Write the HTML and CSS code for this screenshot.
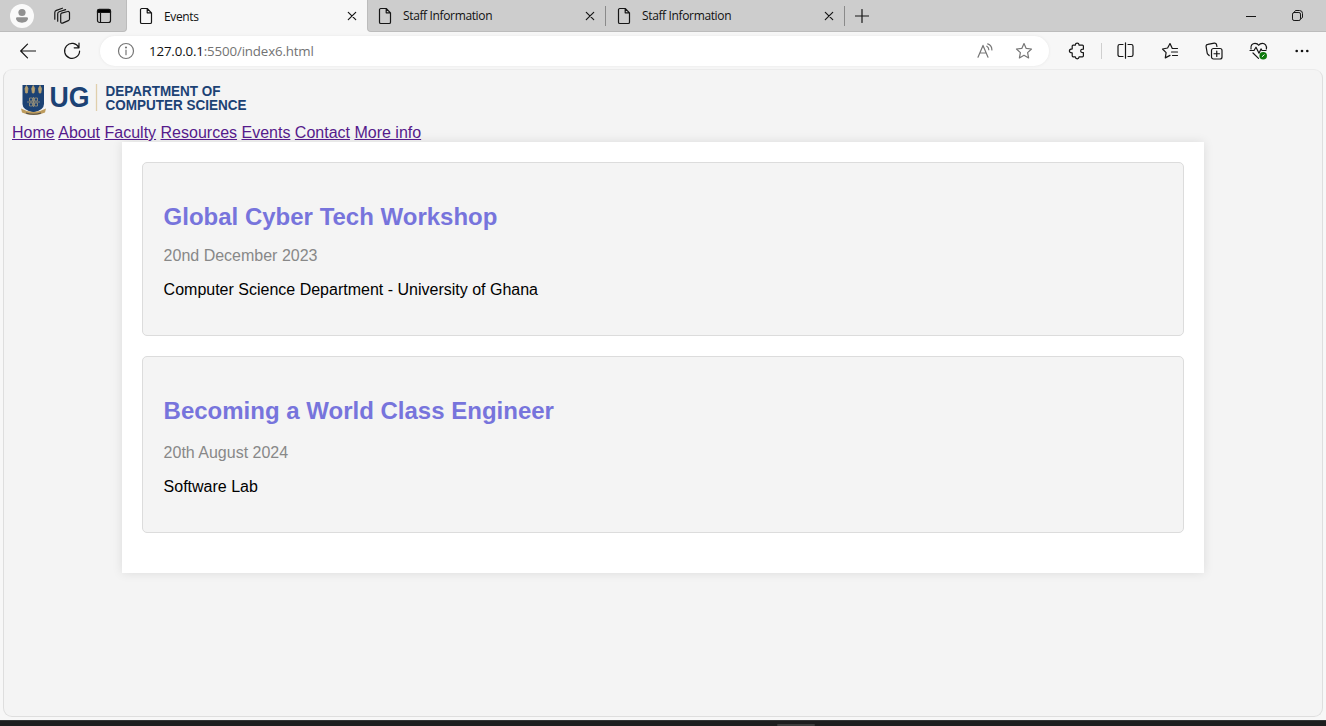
FILE: index.html
```html
<!DOCTYPE html>
<html lang="en">
<head>
<meta charset="utf-8">
<title>Events</title>
<link rel="stylesheet" href="styles.css">
</head>
<body>
<svg width="0" height="0" class="defs">
  <symbol id="file" viewBox="0 0 14 18"><path d="M2.5 1.5h5.7l4.3 4.3v9.4a1.3 1.3 0 0 1-1.3 1.3H2.8a1.3 1.3 0 0 1-1.3-1.3V2.8a1.3 1.3 0 0 1 1.3-1.3M8.2 1.5V5.8h4.3"/></symbol>
  <symbol id="close" viewBox="0 0 10 10"><path d="M1.300 1.300l7.400 7.400M8.700 1.300L1.300 8.700"/></symbol>
</svg>
<header class="tabstrip">
  <div class="window-tools">
    <svg class="icon avatar" viewBox="0 0 24 24"><circle cx="12" cy="12" r="12" fill="#fafafa"/><circle cx="12" cy="8.5" r="3.6" fill="#919191"/><path d="M7.3 13.3h9.4a1.3 1.3 0 0 1 1.3 1.3c0 2.2-2.7 4.2-6 4.2s-6-2-6-4.2a1.3 1.3 0 0 1 1.3-1.3z" fill="#919191"/></svg>
    <svg class="icon workspaces" viewBox="0 0 18 18"><path d="M8.6 6.1l6-1.6a1.4 1.4 0 0 1 1.9 1.3v6.2a1.8 1.8 0 0 1-1.2 1.6l-5.7 2.5a1.3 1.3 0 0 1-1.9-1.1V8a2 2 0 0 1 1-1.9M4.7 14.2V7a2.2 2.2 0 0 1 1.5-2.2l6.4-2.2M1.8 12.2V5.6a2.4 2.4 0 0 1 1.6-2.2l6-2.2"/></svg>
    <svg class="icon tabactions" viewBox="0 0 16 16"><rect x="1.5" y="1.5" width="13" height="13" rx="2"/><path d="M1.5 4.5V3a1.7 1.7 0 0 1 1.7-1.7h9.6A1.7 1.7 0 0 1 14.5 3v1.5z" fill="#000"/><path d="M4.5 5v9.5"/></svg>
  </div>
  <div class="tab active"><svg class="icon file"><use href="#file"/></svg><span>Events</span><svg class="icon close"><use href="#close"/></svg></div>
  <div class="tab"><svg class="icon file"><use href="#file"/></svg><span>Staff Information</span><svg class="icon close"><use href="#close"/></svg></div>
  <div class="tab ruled"><svg class="icon file"><use href="#file"/></svg><span>Staff Information</span><svg class="icon close"><use href="#close"/></svg></div>
  <div class="new-tab"><svg class="icon plus" viewBox="0 0 14 14"><path d="M7 .5v13M.5 7h13"/></svg></div>
  <div class="window-buttons">
    <svg class="icon min" viewBox="0 0 10 10"><path d="M0 5.5h10"/></svg>
    <svg class="icon restore" viewBox="0 0 11 11"><rect x=".5" y="2.5" width="8" height="8" rx="1.6"/><path d="M2.5 1.5A2 2 0 0 1 4 .5h3.5a3 3 0 0 1 3 3V7a2 2 0 0 1-1 1.5"/></svg>
  </div>
</header>
<div class="toolbar">
  <svg class="icon back" viewBox="0 0 16 16"><path d="M15.8 8H.8M7.5 1.2L.7 8l6.8 6.8"/></svg>
  <svg class="icon reload" viewBox="0 0 18 18"><path d="M15.8 5.5A7.5 7.5 0 1 0 16.6 9M16 1v4.8h-4.8"/></svg>
  <div class="address">
    <svg class="icon info" viewBox="0 0 18 18"><circle cx="9" cy="9" r="7.5"/><path d="M9 8v4.7"/><circle cx="9" cy="5.5" r=".5" fill="#767676"/></svg>
    <span class="url"><b>127.0.0.1</b>:5500/index6.html</span>
    <svg class="icon aloud" viewBox="0 0 16 16"><path d="M1 14.2L6 2.4l5 11.8M2.8 10h6.4M9.8 3.2a4 4 0 0 1 2 3.5M10.7.9a6.5 6.5 0 0 1 4.2 6"/></svg>
    <svg class="icon star" viewBox="0 0 18 18"><path d="M9 1.5l2.2 4.9 5.3.6-3.9 3.6 1 5.3L9 13.3l-4.6 2.6 1-5.3L1.5 7l5.3-.6z"/></svg>
  </div>
  <svg class="icon puzzle" viewBox="0 0 18 18"><path d="M4.2 4.1c0-.7.4-1 1-1h2.1c.1-1.2.8-1.9 1.9-1.9s1.8.7 1.9 1.9h3.3c.7 0 1 .4 1 1v3.1c-1.7-.2-2.7.5-2.7 1.7s1 1.9 2.7 1.7v3.2c0 .7-.4 1-1 1h-3.3c-.1 1.3-.8 2-1.9 2s-1.8-.7-1.9-2H5.2c-.6 0-1-.4-1-1v-2.9c-1.7-.1-2.8-.8-2.8-2s1.1-1.9 2.8-2z"/></svg>
  <i class="divider"></i>
  <svg class="icon split" viewBox="0 0 17 17"><path d="M8.5.8v15.4M6 2.5H2.7A1.7 1.7 0 0 0 1 4.2v8.6a1.7 1.7 0 0 0 1.7 1.7H6M11 2.5h3.3A1.7 1.7 0 0 1 16 4.2v8.6a1.7 1.7 0 0 1-1.7 1.7H11"/></svg>
  <svg class="icon favs" viewBox="0 0 18 18"><path d="M16.5 6.5h-5.2L9 1.5 6.6 6 1.5 7l3.6 3.6-.8 5.3L9 13.4M10.5 10h6M11.5 13.5h5"/></svg>
  <svg class="icon collections" viewBox="0 0 18 18"><rect x="6.5" y="6.5" width="10.5" height="10.5" rx="2"/><path d="M11.75 9v5.5M9 11.75h5.5M4.2 13.5L3.1 12.5a2 2 0 0 1-.9-1.4L1.1 4.7A2 2 0 0 1 2.8 2.3l6.5-1.2a2 2 0 0 1 2.3 1.7l.3 1.7"/></svg>
  <svg class="icon heart" viewBox="0 0 20 18"><path d="M2 7C1.3 3.2 3.7 1.3 6 1.3c1.8 0 3 .8 3.7 2 .7-1.2 2-2 3.7-2 2.500 0 4.600 2.100 4 5.700M1 8.500h4l2-3.300 3 6 2-4.300 1 1.600h4M4 11l5.500 5.400"/><circle cx="14.200" cy="13.800" r="3.800" fill="#0e7a0d" stroke="none"/><path d="M13.200 14.600l2-1.800" stroke="#fff" stroke-width="1"/></svg>
  <svg class="icon more" viewBox="0 0 14 4"><g fill="#111" stroke="none"><circle cx="1.700" cy="2" r="1.300"/><circle cx="7" cy="2" r="1.300"/><circle cx="12.300" cy="2" r="1.300"/></g></svg>
</div>
<main class="page">
  <svg class="logo" viewBox="0 0 240 44">
    <path d="M10.5 7h21.5v19q0 6-10.5 8.5Q10.5 32 10.5 26z" fill="#1c4274"/>
    <path d="M13 10.5l1.5-3 1.5 3-.7 4.500h-1.600zM19.700 10.500l1.500-3 1.500 3-.7 4.500h-1.600zM26.500 10.500l1.500-3 1.500 3-.7 4.500h-1.600z" fill="#b5a071" stroke="#b5a071" stroke-width=".8"/>
    <path d="M15 24h13M21.500 19v10M17.500 20h3v3h-3zM22.500 20h3v3h-3zM17.500 25h3v3h-3zM22.500 25h3v3h-3z" fill="none" stroke="#a39878" stroke-width=".8"/>
    <path d="M9 30.500q12.500 7 25 0l-1 4q-11.500 5-23 0z" fill="#bd9b5c"/><path d="M14 35q7.500 2.500 15 0" fill="none" stroke="#4d4c49" stroke-width="1.200"/>
    <text class="ug" x="37.500" y="28.700" textLength="40" lengthAdjust="spacingAndGlyphs">UG</text>
    <path d="M84.500 6v27" stroke="#e0cfac" stroke-width="1.300"/>
    <text class="dept" x="93.500" y="17.500" textLength="115" lengthAdjust="spacingAndGlyphs">DEPARTMENT OF</text>
    <text class="dept" x="93.500" y="32.300" textLength="141" lengthAdjust="spacingAndGlyphs">COMPUTER SCIENCE</text>
  </svg>
  <nav>
    <a href="#">Home</a>
    <a href="#">About</a>
    <a href="#">Faculty</a>
    <a href="#">Resources</a>
    <a href="#">Events</a>
    <a href="#">Contact</a>
    <a href="#">More info</a>
  </nav>
  <section class="container">
    <article class="event">
      <h2>Global Cyber Tech Workshop</h2>
      <p class="date">20nd December 2023</p>
      <p>Computer Science Department - University of Ghana</p>
    </article>
    <article class="event second">
      <h2>Becoming a World Class Engineer</h2>
      <p class="date">20th August 2024</p>
      <p>Software Lab</p>
    </article>
  </section>
</main>
<footer class="taskbar"><i></i></footer>
</body>
</html>
```
FILE: styles.css
```css
* { box-sizing: border-box; }
body { margin: 0; height: 726px; overflow: hidden; display: flex; flex-direction: column; background: #f7f7f7; font-family: "Liberation Sans", Arial, sans-serif; }
.defs { display: none; }
.icon { fill: none; stroke: #161616; stroke-width: 1.2; stroke-linecap: round; stroke-linejoin: round; flex: none; }
.tabstrip { display: flex; height: 32px; flex: none; background: #f7f7f7; font: 12px "Open Sans", "Noto Sans", sans-serif; color: #111; }
.window-tools { width: 127px; display: flex; align-items: center; padding-left: 10px; background: #cdcdcd; border-bottom: 1px solid #bcbcbc; border-right: 1px solid #bcbcbc; border-bottom-right-radius: 4px; }
.avatar { width: 24px; height: 24px; stroke: none; }
.workspaces { width: 18px; height: 18px; margin-left: 19px; }
.tabactions { width: 16px; height: 16px; margin-left: 25px; }
.tab { width: 239px; display: flex; align-items: center; padding: 0 10px 0 11px; background: #cdcdcd; border-bottom: 1px solid #bcbcbc; }
.tab span { flex: 1; margin-left: 11px; letter-spacing: -0.36px; white-space: nowrap; }
.tab.active { width: 240px; padding-left: 12px; padding-right: 11px; background: #f7f7f7; border: 0; border-radius: 4px 4px 0 0; }
.tab.active .close { margin-right: -1px; }
.tab.active + .tab { width: 238px; padding-left: 10px; border-left: 1px solid #bcbcbc; border-bottom-left-radius: 4px; }
.tab.ruled { padding-left: 12px; background: linear-gradient(#8a8a8a, #8a8a8a) 0 6px / 1px 20px no-repeat, #cdcdcd; }
.file { width: 14px; height: 18px; }
.close { width: 10px; height: 10px; }
.new-tab { flex: 1; display: flex; align-items: center; padding-left: 11px; background: linear-gradient(#8a8a8a, #8a8a8a) 0 6px / 1px 20px no-repeat, #cdcdcd; border-bottom: 1px solid #bcbcbc; }
.plus { width: 14px; height: 14px; }
.window-buttons { display: flex; align-items: center; gap: 36px; padding-right: 23px; background: #cdcdcd; border-bottom: 1px solid #bcbcbc; }
.min { width: 10px; height: 10px; stroke-width: 1; }
.restore { width: 11px; height: 11px; stroke-width: 1; }
.toolbar { height: 37px; flex: none; display: flex; align-items: center; padding-left: 20px; }
.back { width: 16px; height: 16px; }
.reload { width: 18px; height: 18px; margin-left: 27px; }
.address { width: 949px; height: 30px; margin-left: 19px; padding: 0 16px 0 17px; border-radius: 15px; background: #fff; box-shadow: 0 0 3px #e6e6e6; display: flex; align-items: center; }
.address .icon { stroke: #767676; }
.info { width: 18px; height: 18px; }
.url { flex: 1; margin-left: 14px; font: 13.3px "Open Sans", "Noto Sans", sans-serif; letter-spacing: -0.15px; color: #737373; }
.url b { font-weight: 400; color: #111; }
.aloud { width: 16px; height: 16px; }
.star { width: 18px; height: 18px; margin-left: 22px; }
.puzzle { width: 18px; height: 18px; margin-left: 19px; }
.divider { width: 1px; height: 16px; margin-left: 15px; background: #cfcfcf; }
.split { width: 17px; height: 17px; margin-left: 15px; }
.favs { width: 18px; height: 18px; margin-left: 27px; }
.collections { width: 18px; height: 18px; margin-left: 26px; }
.heart { width: 20px; height: 18px; margin-left: 26px; }
.more { width: 14px; height: 4px; margin-left: 26px; }
.page { flex: 1; margin: 0 3px 3px; padding: 8px; border: 1px solid #dedede; border-top-color: #ebebeb; border-radius: 9px; background: #f4f4f4; }
.logo { display: block; width: 240px; height: 44px; overflow: visible; }
.logo text { font-family: "Liberation Sans", Arial, sans-serif; font-weight: 700; fill: #1c4274; }
.ug { font-size: 29px; }
.dept { font-size: 14.5px; }
nav { height: 20px; line-height: 22px; font-size: 16px; white-space: nowrap; }
nav a { color: #551a8b; }
.container { width: 1082px; height: 431px; margin: 0 auto; padding: 20px; background: #fff; box-shadow: 0 0 10px rgba(0, 0, 0, .1); }
.event { height: 174px; padding: 40px 20px 0 20.6px; border: 1px solid #dcdcdc; border-radius: 5px; background: #f4f4f4; }
.event.second { height: 177px; margin-top: 20px; }
h2 { margin: 0; font-size: 24px; line-height: 28px; color: #7774dc; }
p { margin: 16px 0 0; font-size: 16px; line-height: 18px; }
h2 + p { margin-top: 16px; }
.second h2 + p { margin-top: 19px; }
.date { color: #888; }
.taskbar { height: 6px; flex: none; display: flex; background: #1d1d1e; border-top: 1px solid #343536; }
.taskbar i { width: 38px; height: 2px; margin: 3px 0 0 777px; background: #3d3d3d; border-radius: 2px; }
```
